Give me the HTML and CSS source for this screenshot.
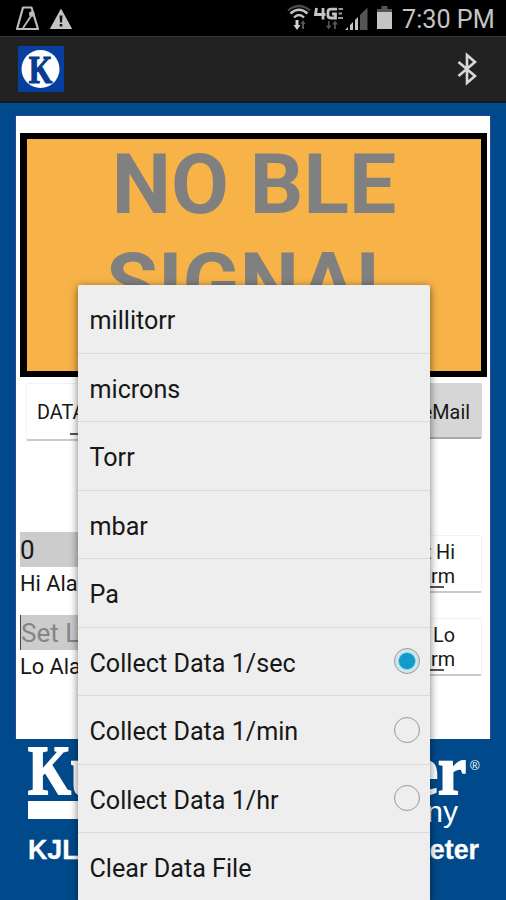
FILE: index.html
```html
<!DOCTYPE html>
<html lang="en">
<head>
<meta charset="utf-8">
<title>Gauge monitor</title>
<link rel="stylesheet" href="styles.css">
</head>
<body>
<div class="phone">
  <header class="status">
    <svg class="status-left" width="60" height="36" viewBox="0 0 60 36">
      <path d="M17 29 L23 7.500 H31.500 L38 29 Z" fill="none" stroke="#bcbcbc" stroke-width="2.200" stroke-linejoin="round"/>
      <path d="M23 28 L33 13" stroke="#bcbcbc" stroke-width="1.800"/>
      <circle cx="31.800" cy="14" r="2.800" fill="#bcbcbc"/>
    </svg>
    <svg class="warn" width="24" height="36" viewBox="0 0 24 36">
      <path d="M12 8.500 L23.200 29 H.8 Z" fill="#c4c4c4"/>
      <path d="M10.500 15.500 H13.500 L13 22.500 H11 Z M10.700 24 H13.300 V26.500 H10.700 Z" fill="#111"/>
    </svg>
    <svg class="signals" width="110" height="36" viewBox="0 0 110 36">
      <g fill="none">
        <path d="M2 10.500 Q13 1.500 24 10.500" stroke="#4a4a4a" stroke-width="2.200"/>
        <path d="M4.500 13.500 Q13 6 21.500 13.500" stroke="#c4c4c4" stroke-width="2.400"/>
        <path d="M8 17.500 Q13 12.500 18 17.500" stroke="#c4c4c4" stroke-width="2.400"/>
      </g>
      <path d="M9.500 20 H12.500 V25 H14.500 L11 30 L7.500 25 H9.500 Z" fill="#d0d0d0"/>
      <path d="M16 29 V24 H14.500 L17 20 L19.500 24 H18 V29 Z M42 21 H43.500 V25.500 H45.500 L42.700 29.500 L40 25.500 H42 Z M48 29 V24.500 H46.200 L49 20.500 L51.800 24.500 H49.800 V29 Z" fill="#555"/>
      <path d="M30.500 8 L29.500 14.500 H39.500 M37 8 V19.500 M51 9.200 H45 Q42 9.200 42 12 V15.500 Q42 18 45 18 H49.500 V14 H46" fill="none" stroke="#c4c4c4" stroke-width="2.800"/>
      <path d="M52.500 9 H57 M52.500 13.500 H56 M52 18 H57" stroke="#999" stroke-width="2"/>
      <path d="M59 30 L62 27 V30 Z M64 30 V25 L67 22 V30 Z M69 30 V20 L72 17 V30 Z" fill="#c4c4c4"/>
      <path d="M74 30 V15 L81.500 7.500 V30 Z" fill="#555"/>
      <path d="M95.500 6 H101.500 V9 H106 V12.500 H91 V9 H95.500 Z" fill="#555"/>
      <path d="M91 12 H106 V29 H91 Z" fill="#c4c4c4"/>
    </svg>
    <span class="clock">7:30 PM</span>
  </header>
  <nav class="appbar">
    <svg width="46" height="46" viewBox="0 0 46 46">
      <rect width="46" height="46" fill="#073f9f"/>
      <circle cx="22.500" cy="23" r="19" fill="#fff"/>
      <text class="logo-k" transform="translate(22.500 36.500) scale(.74 1)" text-anchor="middle">K</text>
    </svg>
    <svg width="22" height="34" viewBox="0 0 22 34">
      <path d="M2.500 10 L19 24 L11 31 V3 L19 10 L2.500 24" fill="none" stroke="#d8d8d8" stroke-width="2.600"/>
    </svg>
  </nav>
  <main class="body">
    <section class="panel">
      <div class="reading"><div class="reading-text">NO BLE<br>SIGNAL</div></div>
      <div class="actions">
        <div class="button data">DATA<span class="line"></span></div>
        <div class="button mail">eMail</div>
      </div>
      <div class="alarms">
        <div class="alarm">
          <div class="setting"><div class="field">0</div><div class="label">Hi Alarm</div></div>
          <div class="button set"><span>Set Hi</span><span>Alarm</span><span class="line"></span></div>
        </div>
        <div class="alarm">
          <div class="setting"><div class="field hint">Set Lo</div><div class="label">Lo Alarm</div></div>
          <div class="button set"><span>Set Lo</span><span>Alarm</span><span class="line"></span></div>
        </div>
      </div>
    </section>
    <footer class="brand">
      <div class="brand-name"><span class="serif kurt">Kurt</span><span class="right"><span class="serif lesker">Lesker</span><span class="reg">®</span></span></div>
      <div class="brand-sub"><span class="bar"></span><span class="company">Company</span></div>
      <div class="product"><span>KJLC</span><span>Meter</span></div>
    </footer>
  </main>
  <div class="menu">
    <div class="item">millitorr</div>
    <div class="item">microns</div>
    <div class="item">Torr</div>
    <div class="item">mbar</div>
    <div class="item">Pa</div>
    <div class="item">Collect Data 1/sec<span class="radio on"></span></div>
    <div class="item">Collect Data 1/min<span class="radio"></span></div>
    <div class="item">Collect Data 1/hr<span class="radio"></span></div>
    <div class="item">Clear Data File</div>
  </div>
</div>
</body>
</html>
```
FILE: styles.css
```css
* { box-sizing: border-box; }
body { margin: 0; background: #004b8d; font-family: Roboto, sans-serif; color: #171717; }
.phone { position: relative; width: 506px; height: 900px; overflow: hidden; display: flex; flex-direction: column; background: #004a8b; }
.status { height: 36px; background: #000; display: flex; flex: none; }
.status-left { margin-right: -11px; }
.signals { margin-left: 213px; }
.clock { margin-left: 6px; width: 110px; color: #c4c4c4; font-size: 25.2px; line-height: 39px; white-space: nowrap; }
.status svg { flex: none; }
.appbar { height: 67px; flex: none; background: #222; border-top: 1px solid #343434; border-bottom: 2px solid #14191d; display: flex; align-items: center; justify-content: space-between; padding: 0 28px 0 18px; }
.logo-k { font: bold 41px "Liberation Serif", serif; fill: #063b91; stroke: #063b91; stroke-width: 1.2px; }
.body { flex: 1; padding: 12px 15px 0; }
.panel { height: 624px; width: 476px; background: #fff; border: 1px solid #2845a0; border-bottom: 0; padding: 17px 3px 0 4px; }
.reading { height: 244px; border: solid #000; border-width: 6px 6px 6px 7px; background: #f7b348; color: #808080; text-align: center; font-weight: 700; font-size: 84px; line-height: 99px; overflow: hidden; }
.reading-text { margin-top: -4px; }
.actions { display: flex; justify-content: space-between; padding: 6px 5px 0 6px; height: 155px; }
.button { position: relative; background: #fff; border: 1px solid #f2f2f2; border-bottom: 2px solid #c9c9c9; border-radius: 2px; font-size: 19.8px; }
.data { width: 120px; height: 58px; padding: 0 10px; line-height: 57px; }
.mail { width: 100px; height: 56px; background: #d6d6d6; border-color: #d6d6d6; border-bottom-color: #aaa; line-height: 57px; padding-right: 11px; text-align: right; }
.line { position: absolute; height: 2px; background: #555; width: 32px; bottom: 3px; right: 37px; }
.data .line { left: 43px; bottom: 4px; }
.alarm { display: flex; justify-content: space-between; height: 82.5px; padding-right: 5px; }
.setting { width: 280px; }
.field { height: 35px; background: #ccc; font-size: 26px; line-height: 37px; }
.hint { color: #858585; border-left: 1px solid #444; }
.label { font-size: 21.8px; line-height: 33px; }
.set { width: 95px; height: 58px; margin-top: 3px; line-height: 24px; padding: 5px 26px 0 0; display: flex; flex-direction: column; text-align: right; }
.brand { color: #fff; display: flex; flex-direction: column; padding: 0 12px 0 13px; }
.brand-name { height: 62px; display: flex; justify-content: space-between; }
.serif { font: bold 69px/65px "Liberation Serif", serif; -webkit-text-stroke: 2px #fff; display: block; }
.kurt { transform: scaleX(.8); transform-origin: left; }
.lesker { transform: scaleX(.92); transform-origin: right; }
.right { display: flex; }
.reg { font: 13px/54px "Liberation Sans", sans-serif; width: 13px; padding-left: 4px; }
.brand-sub { height: 34px; display: flex; justify-content: space-between; }
.bar { width: 120px; height: 18px; background: #fff; }
.company { font: 30px/22px "Liberation Sans", sans-serif; margin-right: 21px; }
.product { display: flex; justify-content: space-between; font: bold 26.8px/31px "Liberation Sans", sans-serif; -webkit-text-stroke: .3px #fff; }
.menu { position: absolute; left: 78px; top: 285px; width: 352px; background: #eee; box-shadow: 0 2px 8px rgba(0,0,0,.55); border-radius: 2px; }
.item { height: 68.53px; border-bottom: 1px solid #dadada; display: flex; align-items: center; justify-content: space-between; padding: 4px 10px 0 11.5px; font-size: 25.15px; }
.radio { width: 26px; height: 26px; border: 1.5px solid #999; border-radius: 50%; margin-top: -4px; }
.on { background: radial-gradient(circle, #119bcd 0 7.5px, #cde6ee 9px); }
```
